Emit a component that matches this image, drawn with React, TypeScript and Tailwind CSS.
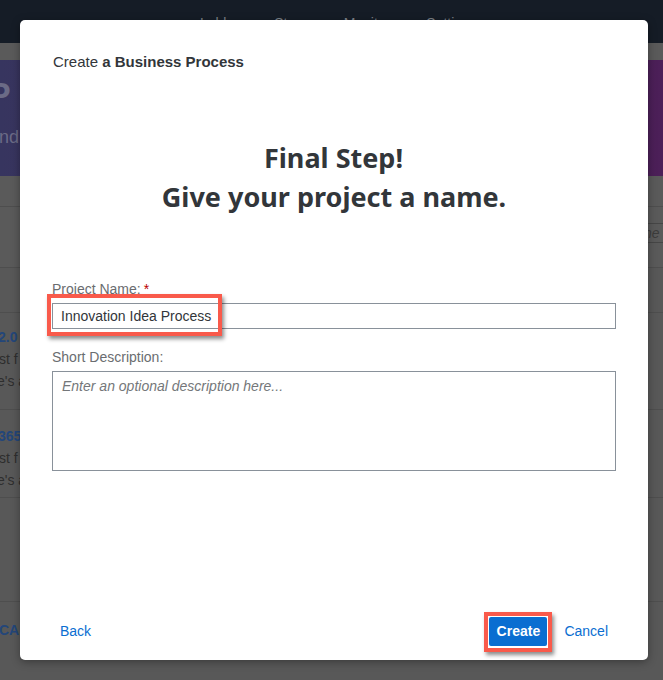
import React from "react";

export default function App() {
  const sans = { fontFamily: '"Liberation Sans", Arial, sans-serif' };
  return (
    <div className="relative w-[663px] h-[680px] overflow-hidden bg-[#585858]" style={sans}>
      {/* Background page (dimmed) */}
      <div className="flex flex-col w-full h-full">
        <div className="h-[43px] bg-[#151c26] flex items-start pt-[13px] pl-[200px] gap-[36px] text-[14px] text-[#7d8288]">
          <span>Lobby</span>
          <span>Store</span>
          <span>Monitor</span>
          <span>Settings</span>
        </div>
        <div className="h-[17px] bg-[#5a5a5a]" />
        <div className="h-[116px] bg-gradient-to-r from-[#37355f] to-[#4c1f58] flex flex-col pt-[14px] text-[#6b6b86] whitespace-nowrap">
          <div className="text-[34px] font-bold leading-[40px] -ml-[12px]">P</div>
          <div className="text-[18px] leading-[24px] mt-[11px] -ml-[1px]">nd</div>
        </div>
        <div className="h-[31px] border-b border-[#4e4e4e] bg-[#5a5a5a]" />
        <div className="h-[61px] border-b border-[#4e4e4e] bg-[#5a5a5a] flex justify-end items-start pt-[16px]">
          <div className="w-[25px] h-[20px] border-y border-l border-[#464646] text-[14px] italic text-[#3c3c3c] leading-[18px] pl-[5px] overflow-hidden whitespace-nowrap">ne</div>
        </div>
        <div className="h-[45px] border-b border-[#4e4e4e] bg-[#585858]" />
        <div className="h-[97px] border-b border-[#4e4e4e] bg-[#585858] pt-[13px] text-[14px] leading-[22px] text-[#2e2e2e] whitespace-nowrap">
          <div className="font-bold text-[#23467a] -ml-[2px]">2.0</div>
          <div className="-ml-[1px]">st f</div>
          <div className="-ml-[3px]">e's a</div>
        </div>
        <div className="h-[88px] border-b border-[#4e4e4e] bg-[#585858] pt-[15px] text-[14px] leading-[22px] text-[#2e2e2e] whitespace-nowrap">
          <div className="font-bold text-[#23467a] -ml-[2px]">365</div>
          <div className="-ml-[1px]">st f</div>
          <div className="-ml-[3px]">e's a</div>
        </div>
        <div className="h-[104px] border-b border-[#4e4e4e] bg-[#585858]" />
        <div className="flex-1 bg-[#585858] pt-[18px] text-[14px] font-bold text-[#23467a] whitespace-nowrap">
          <div className="-ml-[1px]">CA</div>
        </div>
      </div>

      {/* Modal */}
      <div className="absolute left-[20px] top-[20px] w-[628px] h-[640px] bg-white rounded-[5px] shadow-[0_2px_8px_rgba(0,0,0,0.35)] flex flex-col text-[#32363a]">
        <div className="pt-[32px] pl-[33px] text-[15px] leading-[20px]">
          Create <span className="font-bold">a Business Process</span>
        </div>
        <div
          className="mt-[66px] text-center text-[27px] leading-[39px] font-bold text-[#32363a]"
          style={{ fontFamily: '"Noto Sans", "Open Sans", sans-serif' }}
        >
          <div className="-ml-[1px]">Final Step!</div>
          <div>Give your project a name.</div>
        </div>
        <div className="px-[32px] mt-[64px] flex flex-col">
          <div className="text-[14px] leading-[18px] text-[#6a6d70]">
            Project Name:<span className="text-[#bb0000] ml-[3px]">*</span>
          </div>
          <div className="relative mt-[5px]">
            <div className="h-[26px] border border-[#89919a] flex items-center px-[8px] text-[14px] text-[#32363a]">
              Innovation Idea Process
            </div>
            <div className="absolute -left-[5px] -top-[9px] w-[175px] h-[42px] border-[4px] border-[#f95a4b] shadow-[2px_3px_4px_rgba(0,0,0,0.45)]" />
          </div>
          <div className="mt-[19px] text-[14px] leading-[18px] text-[#6a6d70]">Short Description:</div>
          <div className="mt-[5px] h-[100px] border border-[#89919a] px-[9px] pt-[4px] text-[14px] italic text-[#74777a]">
            Enter an optional description here...
          </div>
        </div>
        <div className="mt-auto pb-[14px] pl-[40px] pr-[40px] flex items-center">
          <span className="text-[14px] text-[#0a6ed1]">Back</span>
          <div className="ml-auto relative">
            <div className="h-[29px] w-[58px] bg-[#0a6ed1] rounded-[2px] text-white font-bold text-[14px] flex items-center justify-center">
              Create
            </div>
            <div className="absolute -left-[5px] -top-[5px] w-[68px] h-[40px] border-[4px] border-[#f95a4b] shadow-[2px_3px_4px_rgba(0,0,0,0.45)]" />
          </div>
          <span className="ml-[17px] text-[14px] text-[#0a6ed1]">Cancel</span>
        </div>
      </div>
    </div>
  );
}
